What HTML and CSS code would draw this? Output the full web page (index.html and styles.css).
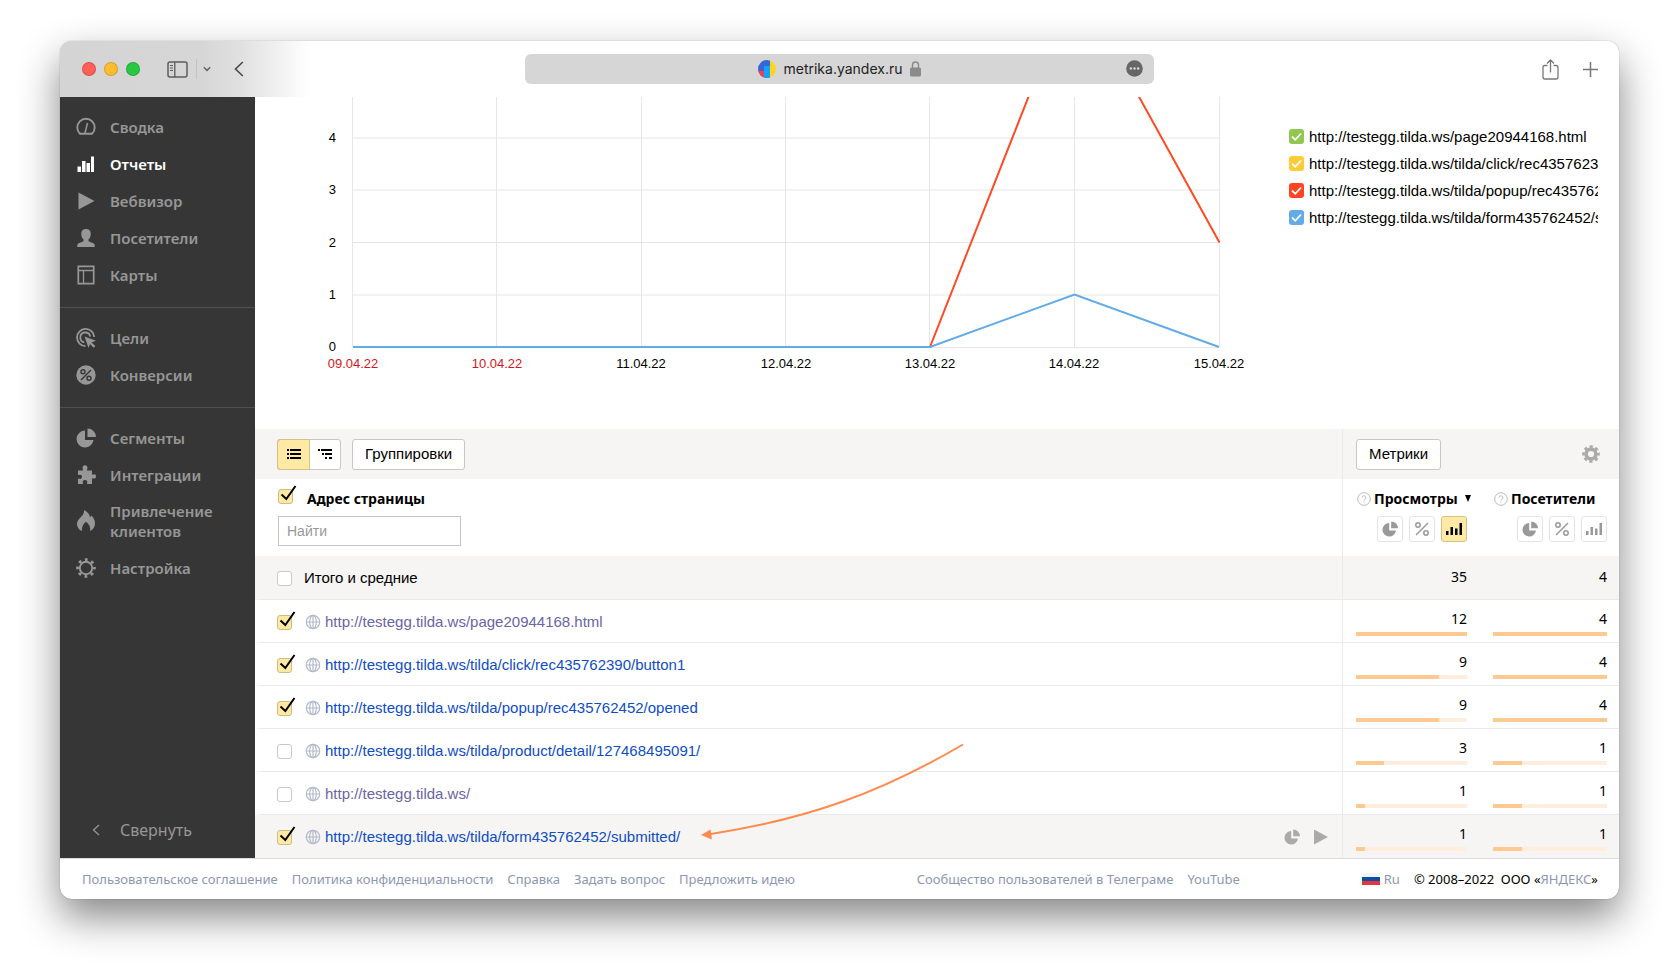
FILE: index.html
```html
<!DOCTYPE html>
<html lang="ru">
<head>
<meta charset="utf-8">
<title>Яндекс Метрика — Отчеты</title>
<link rel="stylesheet" href="styles.css">
</head>
<body>
<svg class="sprite" aria-hidden="true">
  <symbol id="i-tick" viewBox="0 0 20 20"><path d="M3.500 10.500 8.300 15 17.500 2" fill="none" stroke="#000" stroke-width="2"/></symbol>
  <symbol id="i-globe" viewBox="0 0 16 16"><g fill="none" stroke="#b4bacb" stroke-width="1.200"><circle cx="8" cy="8" r="6.700"/><ellipse cx="8" cy="8" rx="3.300" ry="6.700"/><path d="M8 1.300v13.400M1.300 8h13.400"/></g></symbol>
  <symbol id="i-pie" viewBox="0 0 20 20"><path d="M9 2.500A8.500 8.500 0 1 0 17.500 12H9z" fill="currentColor"/><path d="M11.500.500V9H20A8.500 8.500 0 0 0 11.500.500z" fill="currentColor"/></symbol>
  <symbol id="i-percent" viewBox="0 0 16 16"><g fill="none" stroke="currentColor" stroke-width="1.500"><circle cx="4" cy="4" r="2.200"/><circle cx="12" cy="12" r="2.200"/><path d="M14 2 2 14"/></g></symbol>
  <symbol id="i-bars" viewBox="0 0 16 16"><path d="M0 10h2.500v4H0zM4.500 6H7v8H4.500zM9 7.500h2.500V14H9zM13.500 2H16v12h-2.500z" fill="currentColor"/></symbol>
  <symbol id="i-help" viewBox="0 0 14 14"><circle cx="7" cy="7" r="6.300" fill="none" stroke="#bbb"/><path d="M5.200 5.600a1.800 1.800 0 1 1 2.700 1.500c-.700.400-.900.700-.900 1.400M7 9.500v1" fill="none" stroke="#bbb"/></symbol>
  <symbol id="i-play" viewBox="0 0 16 18"><path d="M0 .500 16 9 0 17.500z" fill="currentColor"/></symbol>
  <symbol id="i-check" viewBox="0 0 15 15"><path d="M3 7.500 6.300 10.800 12 4.500" fill="none" stroke="#fff" stroke-width="1.800"/></symbol>
</svg>

<div class="window">
  <header class="chrome">
    <div class="chrome-left">
      <div class="lights"><span class="light red"></span><span class="light amber"></span><span class="light green"></span></div>
      <button class="bare" aria-label="Боковая панель"><svg width="21" height="17" viewBox="0 0 21 17"><rect x="1" y="1" width="19" height="15" rx="2" fill="none" stroke="#5c5c5c" stroke-width="1.500"/><path d="M7.800 1v15" stroke="#5c5c5c" stroke-width="1.300"/><path d="M3 4.500h3M3 7h3M3 9.500h3" stroke="#5c5c5c"/></svg></button>
      <span class="chrome-sep"></span>
      <button class="bare" aria-label="Группы вкладок"><svg width="8" height="6" viewBox="0 0 8 6"><path d="M.800 1.200 4 4.400 7.200 1.200" fill="none" stroke="#666" stroke-width="1.500"/></svg></button>
      <button class="bare back" aria-label="Назад"><svg width="10" height="16" viewBox="0 0 10 16"><path d="M8.800 1 1.500 8l7.300 7" fill="none" stroke="#4a4a4a" stroke-width="1.600"/></svg></button>
    </div>
    <div class="address">
      <svg width="18" height="18" viewBox="0 0 18 18"><defs><clipPath id="disc"><circle cx="9" cy="9" r="9"/></clipPath></defs><g clip-path="url(#disc)"><path fill="#3565d6" d="M0 0h12v18H0z"/><path fill="#ffd51f" d="M12 0h6v18h-6z"/><path fill="#fb3a4d" d="M0 11h6v7H0z"/><path fill="#0fa3ff" d="M6 6h6v12H6z"/></g></svg>
      <span class="host">metrika.yandex.ru</span>
      <svg width="11" height="16" viewBox="0 0 11 16"><rect y="6.500" width="11" height="9" rx="1.500" fill="#8a8a8a"/><path d="M2.500 7V4a3 3 0 0 1 6 0v3" fill="none" stroke="#8a8a8a" stroke-width="1.400"/></svg>
      <button class="bare more" aria-label="Ещё"><svg width="17" height="17" viewBox="0 0 17 17"><circle cx="8.500" cy="8.500" r="8.300" fill="#666"/><g fill="#d9d9d9"><circle cx="4.800" cy="8.500" r="1.200"/><circle cx="8.500" cy="8.500" r="1.200"/><circle cx="12.200" cy="8.500" r="1.200"/></g></svg></button>
    </div>
    <div class="chrome-right">
      <button class="bare" aria-label="Поделиться"><svg width="17" height="21" viewBox="0 0 17 21"><path d="M5.500 6.500H3a2 2 0 0 0-2 2V18a2 2 0 0 0 2 2h11a2 2 0 0 0 2-2V8.500a2 2 0 0 0-2-2h-2.500M8.500 13.500V1.200M5 4.500 8.500 1 12 4.500" fill="none" stroke="#777" stroke-width="1.300"/></svg></button>
      <button class="bare" aria-label="Новая вкладка"><svg width="15" height="15" viewBox="0 0 15 15"><path d="M7.500 0v15M0 7.500h15" stroke="#777" stroke-width="1.500"/></svg></button>
    </div>
  </header>

  <div class="body">
    <nav class="sidebar">
      <div class="group">
        <a class="item" href="#"><svg width="20" height="20" viewBox="0 0 20 20"><path d="M4 16.800A8.700 8.700 0 1 1 16 16.800z" fill="none" stroke="currentColor" stroke-width="1.900" stroke-linejoin="round"/><path d="M11.500 6 9 16" stroke="currentColor" stroke-width="1.500"/></svg>Сводка</a>
        <a class="item active" href="#"><svg width="20" height="20" viewBox="0 0 20 20"><path d="M1.500 12.500h3.500V18H1.500zM6 7h3.500v11H6zM10.500 9h3.500v9h-3.500zM15 2.500h3V18h-3z" fill="currentColor"/></svg>Отчеты</a>
        <a class="item" href="#"><svg width="20" height="20" viewBox="0 0 20 20"><path d="M2.500 1.500 18.500 10l-16 8.500z" fill="currentColor"/></svg>Вебвизор</a>
        <a class="item" href="#"><svg width="20" height="20" viewBox="0 0 20 20"><path d="M10 1c3 0 4.800 1.900 4.800 4.800 0 2.400-1 4.700-2.300 5.700v1.800l5.300 2.200c.800.400 1 1.300 1 3.500H1.200c0-2.200.200-3.100 1-3.500l5.300-2.200v-1.800C6.200 10.500 5.200 8.200 5.200 5.800 5.200 2.900 7 1 10 1z" fill="currentColor"/></svg>Посетители</a>
        <a class="item" href="#"><svg width="20" height="20" viewBox="0 0 20 20"><path d="M2.300 1.300h15.400v17.400H2.300z" fill="none" stroke="currentColor" stroke-width="1.700"/><path d="M2 5.500h16M7.500 5.500V19" stroke="currentColor" stroke-width="1.300"/></svg>Карты</a>
      </div>
      <div class="group">
        <a class="item" href="#"><svg width="20" height="20" viewBox="0 0 20 20"><g fill="none" stroke="currentColor" stroke-width="1.800"><path d="M9.500 18.100A8.600 8.600 0 1 1 18.200 9"/><path d="M8.300 14.400A5 5 0 1 1 14.200 8.500"/></g><path d="M8.500 8.500 20 12.800l-4.400 1.600 3.700 3.700-1.600 1.600-3.700-3.700-1.500 4z" fill="currentColor"/></svg>Цели</a>
        <a class="item" href="#"><svg width="20" height="20" viewBox="0 0 20 20"><circle cx="10" cy="10" r="9.700" fill="currentColor"/><g fill="none" stroke="#363636" stroke-width="1.400"><circle cx="7" cy="6.800" r="2"/><circle cx="13" cy="13.200" r="2"/><path d="M15 5 5 15"/></g></svg>Конверсии</a>
      </div>
      <div class="group">
        <a class="item" href="#"><svg width="20" height="20"><use href="#i-pie"/></svg>Сегменты</a>
        <a class="item" href="#"><svg width="20" height="20" viewBox="0 0 20 20"><path d="M2 5.500h4.200c1.300 0 .800-1 .500-1.600C6 2 7.300.300 9 .300S12 2 11.300 3.900c-.300.600-.800 1.600.500 1.600H16V9c0 1.200 1 .700 1.500.400 1.400-.500 2.500.500 2.500 2s-1.100 2.600-2.500 2c-.500-.200-1.500-.700-1.500.500V19h-4.500c-1 0-.500-1-.300-1.500.500-1.400-.600-2.500-2.200-2.500s-2.700 1.100-2.200 2.500c.200.500.700 1.500-.300 1.500H2v-4.800c0-.900.800-.600 1.300-.400 1.400.500 2.700-.500 2.700-2s-1.300-2.500-2.700-2c-.5.200-1.300.500-1.300-.4z" fill="currentColor"/></svg>Интеграции</a>
        <a class="item two-line" href="#"><svg width="20" height="22" viewBox="0 0 20 22"><path d="M8.200 0c4.300 2.500 5.800 5.300 5.700 7.600l1.500-2.200C17.800 7.500 19 10.500 19 13.500c0 3.600-2 6.200-4.800 7.500.5-4-.9-6.800-4.200-9.300-2.800 2.300-4.500 5.300-4.100 9.300C3 19.700 1 17.200 1 13.900 1 8.500 8.500 6.500 8.200 0z" fill="currentColor"/></svg><span>Привлечение клиентов</span></a>
        <a class="item" href="#"><svg width="20" height="20" viewBox="0 0 20 20"><circle cx="10" cy="10" r="6.200" fill="none" stroke="currentColor" stroke-width="1.900"/><circle cx="10" cy="10" r="8.400" fill="none" stroke="currentColor" stroke-width="2.800" stroke-dasharray="2.800 3.797" stroke-dashoffset="1.400"/></svg>Настройка</a>
      </div>
      <button class="collapse"><svg width="8" height="12" viewBox="0 0 8 12"><path d="M7 1 1.500 6 7 11" fill="none" stroke="currentColor" stroke-width="1.200"/></svg>Свернуть</button>
    </nav>

    <main class="main">
      <section class="chart">
        <svg class="plot" viewBox="-1 0 1034 331" role="img" aria-label="Просмотры по дням">
          <g class="grid">
            <path d="M96.500 0v250M240.500 0v250M385.500 0v250M529.500 0v250M673.500 0v250M818.500 0v250M963.500 0v250"/>
            <path d="M97 41h866M97 93h866M97 145.500h866M97 198h866M97 250.500h866"/>
          </g>
          <path class="line orange" d="M674 250 818.500-117 963.500 145.500"/>
          <path class="line blue" d="M97 250H674L818.500 197.500 963 250"/>
          <g class="ylab"><text x="80" y="45">4</text><text x="80" y="97">3</text><text x="80" y="150">2</text><text x="80" y="202">1</text><text x="80" y="254">0</text></g>
          <g class="xlab"><text class="holiday" x="97" y="271">09.04.22</text><text class="holiday" x="241" y="271">10.04.22</text><text x="385" y="271">11.04.22</text><text x="530" y="271">12.04.22</text><text x="674" y="271">13.04.22</text><text x="818" y="271">14.04.22</text><text x="963" y="271">15.04.22</text></g>
        </svg>
        <div class="legend">
          <label class="key"><span class="swatch"><input type="checkbox" class="c-green" checked><svg><use href="#i-check"/></svg></span><span class="key-text">http://testegg.tilda.ws/page20944168.html</span></label>
          <label class="key"><span class="swatch"><input type="checkbox" class="c-yellow" checked><svg><use href="#i-check"/></svg></span><span class="key-text">http://testegg.tilda.ws/tilda/click/rec435762390/button1</span></label>
          <label class="key"><span class="swatch"><input type="checkbox" class="c-red" checked><svg><use href="#i-check"/></svg></span><span class="key-text">http://testegg.tilda.ws/tilda/popup/rec435762452/opened</span></label>
          <label class="key"><span class="swatch"><input type="checkbox" class="c-blue" checked><svg><use href="#i-check"/></svg></span><span class="key-text">http://testegg.tilda.ws/tilda/form435762452/submitted/</span></label>
        </div>
      </section>

      <section class="report">
        <div class="tools">
          <div class="tools-left">
            <div class="segmented">
              <button class="seg on" aria-label="Список"><svg width="14" height="10" viewBox="0 0 14 10"><path d="M0 0h2v2H0zM3 0h11v2H3zM0 4h2v2H0zM3 4h11v2H3zM0 8h2v2H0zM3 8h11v2H3z"/></svg></button>
              <button class="seg" aria-label="Дерево"><svg width="14" height="10" viewBox="0 0 14 10"><path d="M0 0h2v2H0zM3 0h11v2H3zM4 4h2v2H4zM7 4h7v2H7zM7 8h2v2H7zM11 8h3v2h-3z"/></svg></button>
            </div>
            <button class="btn">Группировки</button>
          </div>
          <div class="tools-right">
            <button class="btn">Метрики</button>
            <button class="bare" aria-label="Настройки"><svg width="18" height="18" viewBox="0 0 18 18"><circle cx="9" cy="9" r="4.900" fill="none" stroke="#aaa" stroke-width="3.600"/><circle cx="9" cy="9" r="7.500" fill="none" stroke="#aaa" stroke-width="2.600" stroke-dasharray="3.200 2.690" stroke-dashoffset="1.600"/></svg></button>
          </div>
        </div>

        <table class="table">
          <colgroup><col><col class="col-views"><col class="col-visitors"></colgroup>
          <thead>
            <tr>
              <th scope="col" class="head-page">
                <label class="page-label"><span class="box"><input type="checkbox" checked><svg><use href="#i-tick"/></svg></span>Адрес страницы</label>
                <input class="search" type="text" placeholder="Найти" aria-label="Найти">
              </th>
              <th scope="col" class="metric">
                <div class="metric-name"><svg class="help"><use href="#i-help"/></svg>Просмотры<svg class="sort" width="6" height="7" viewBox="0 0 6 7"><path d="M0 0h6L3 7z"/></svg></div>
                <div class="modes"><button class="mode" aria-label="Круг"><svg><use href="#i-pie"/></svg></button><button class="mode" aria-label="Проценты"><svg><use href="#i-percent"/></svg></button><button class="mode on" aria-label="Столбцы"><svg><use href="#i-bars"/></svg></button></div>
              </th>
              <th scope="col">
                <div class="metric-name"><svg class="help"><use href="#i-help"/></svg>Посетители</div>
                <div class="modes"><button class="mode" aria-label="Круг"><svg><use href="#i-pie"/></svg></button><button class="mode" aria-label="Проценты"><svg><use href="#i-percent"/></svg></button><button class="mode" aria-label="Столбцы"><svg><use href="#i-bars"/></svg></button></div>
              </th>
            </tr>
          </thead>
          <tbody>
            <tr class="total">
              <td><label class="cell"><span class="box"><input type="checkbox"><svg><use href="#i-tick"/></svg></span>Итого и средние</label></td>
              <td class="metric num">35</td><td class="num">4</td>
            </tr>
            <tr class="s-green">
              <td><div class="cell"><span class="box"><input type="checkbox" aria-label="page20944168" checked><svg><use href="#i-tick"/></svg></span><svg class="globe"><use href="#i-globe"/></svg><a class="visited" href="#">http://testegg.tilda.ws/page20944168.html</a></div></td>
              <td class="metric num">12<div class="bar"><div style="width:100%"></div></div></td><td class="num">4<div class="bar"><div style="width:100%"></div></div></td>
            </tr>
            <tr class="s-yellow">
              <td><div class="cell"><span class="box"><input type="checkbox" aria-label="button1" checked><svg><use href="#i-tick"/></svg></span><svg class="globe"><use href="#i-globe"/></svg><a href="#">http://testegg.tilda.ws/tilda/click/rec435762390/button1</a></div></td>
              <td class="metric num">9<div class="bar"><div style="width:75%"></div></div></td><td class="num">4<div class="bar"><div style="width:100%"></div></div></td>
            </tr>
            <tr class="s-red">
              <td><div class="cell"><span class="box"><input type="checkbox" aria-label="opened" checked><svg><use href="#i-tick"/></svg></span><svg class="globe"><use href="#i-globe"/></svg><a href="#">http://testegg.tilda.ws/tilda/popup/rec435762452/opened</a></div></td>
              <td class="metric num">9<div class="bar"><div style="width:75%"></div></div></td><td class="num">4<div class="bar"><div style="width:100%"></div></div></td>
            </tr>
            <tr>
              <td><div class="cell"><span class="box"><input type="checkbox" aria-label="product"><svg><use href="#i-tick"/></svg></span><svg class="globe"><use href="#i-globe"/></svg><a href="#">http://testegg.tilda.ws/tilda/product/detail/127468495091/</a></div></td>
              <td class="metric num">3<div class="bar"><div style="width:25%"></div></div></td><td class="num">1<div class="bar"><div style="width:25%"></div></div></td>
            </tr>
            <tr>
              <td><div class="cell"><span class="box"><input type="checkbox" aria-label="testegg.tilda.ws"><svg><use href="#i-tick"/></svg></span><svg class="globe"><use href="#i-globe"/></svg><a class="visited" href="#">http://testegg.tilda.ws/</a></div></td>
              <td class="metric num">1<div class="bar"><div style="width:8%"></div></div></td><td class="num">1<div class="bar"><div style="width:25%"></div></div></td>
            </tr>
            <tr class="s-blue hover">
              <td><div class="cell"><span class="box"><input type="checkbox" aria-label="submitted" checked><svg><use href="#i-tick"/></svg></span><svg class="globe"><use href="#i-globe"/></svg><a href="#">http://testegg.tilda.ws/tilda/form435762452/submitted/</a>
                <span class="actions"><button class="bare" aria-label="Сегмент"><svg width="16" height="16"><use href="#i-pie"/></svg></button><button class="bare" aria-label="Вебвизор"><svg width="14" height="16"><use href="#i-play"/></svg></button></span></div></td>
              <td class="metric num">1<div class="bar"><div style="width:8%"></div></div></td><td class="num">1<div class="bar"><div style="width:25%"></div></div></td>
            </tr>
          </tbody>
        </table>
        <svg class="arrow" width="265" height="102" viewBox="0 0 265 102"><path d="M263 3.500C180 52 108 78 11 93" fill="none" stroke="#ff8a50" stroke-width="2"/><path d="M1 94 10.500 88.500 12 98.500z" fill="#ff8a50"/></svg>
      </section>
    </main>
  </div>

  <footer class="footer">
    <div class="links"><a href="#">Пользовательское соглашение</a><a href="#">Политика конфиденциальности</a><a href="#">Справка</a><a href="#">Задать вопрос</a><a href="#">Предложить идею</a></div>
    <div class="links"><a href="#">Сообщество пользователей в Телеграме</a><a href="#">YouTube</a></div>
    <div class="links"><a class="lang" href="#"><svg width="18" height="12" viewBox="0 0 18 12"><path fill="#f4f4f6" d="M0 0h18v4H0z"/><path fill="#0b4ea2" d="M0 4h18v4H0z"/><path fill="#e4343f" d="M0 8h18v4H0z"/></svg>Ru</a><span>© 2008–2022&nbsp; ООО «<a href="#">ЯНДЕКС</a>»</span></div>
  </footer>
</div>
</body>
</html>
```

FILE: styles.css
```css
* { box-sizing: border-box; }

body {
  margin: 0;
  min-height: 100vh;
  padding: 41px 61px 79px 60px;
  background: #fff;
  color: #000;
  font: 15px/20px "Liberation Sans", Arial, sans-serif;
}

a { color: #0f4dc4; text-decoration: none; }
button, input { font: inherit; color: inherit; }
svg { display: block; flex: none; }
.sprite { position: absolute; width: 0; height: 0; }
.bare { padding: 0; border: 0; background: none; cursor: pointer; }

.window {
  display: flex;
  flex-direction: column;
  border-radius: 12px;
  overflow: hidden;
  background: #fff;
  box-shadow: 0 0 1px rgba(0, 0, 0, .5), 0 18px 40px rgba(0, 0, 0, .48);
}

/* Browser bar */
.chrome {
  display: grid;
  grid-template-columns: 1fr minmax(0, 629px) 1fr;
  align-items: center;
  height: 56px;
  background: linear-gradient(90deg, #d4d4d4 0, #d6d6d6 140px, #e0e0e0 180px, #fff 250px);
}
.chrome-left { display: flex; align-items: center; padding-left: 22px; }
.lights { display: flex; gap: 8px; margin-right: 27px; }
.light { width: 14px; height: 14px; border-radius: 50%; border: 1px solid rgba(0, 0, 0, .15); }
.red { background: #fe5f57; }
.amber { background: #febc2e; }
.green { background: #28c840; }
.chrome-sep { width: 1px; height: 20px; margin: 0 6px 0 8px; background: #c4c4c4; }
.back { margin-left: 23px; }
.address {
  position: relative;
  display: flex;
  align-items: center;
  justify-content: center;
  gap: 7px;
  height: 30px;
  border-radius: 6px;
  background: #d6d6d6;
}
.host { font: 14px/20px Inter, "Liberation Sans", sans-serif; color: #222; }
.more { position: absolute; right: 11px; top: 6px; }
.chrome-right { display: flex; align-items: center; justify-content: flex-end; gap: 24px; padding-right: 21px; }

.body { display: flex; flex: 1; }

/* Navigation */
.sidebar {
  display: flex;
  flex-direction: column;
  flex: none;
  width: 195px;
  background: #363636;
  color: #979797;
  font: 600 15px/20px "Noto Sans", sans-serif;
}
.group { padding: 11px 0 14px; border-bottom: 1px solid #505050; }
.group:last-of-type { border-bottom: 0; }
.item { display: flex; align-items: center; gap: 14px; height: 37px; padding-left: 16px; color: inherit; }
.item.active { color: #fff; }
.two-line { height: 56px; padding-right: 30px; }
.collapse {
  display: flex;
  align-items: center;
  gap: 20px;
  margin-top: auto;
  padding: 0 0 18px 32px;
  border: 0;
  background: none;
  font-size: 16px;
  font-weight: 400;
}

.main { flex: 1; min-width: 0; }

/* Chart */
.chart { display: flex; align-items: flex-start; padding: 0 21px 1px 0; }
.plot { flex: 1; min-width: 0; font-size: 13px; }
.grid path { fill: none; stroke: #e6e6e6; }
.line { fill: none; stroke-width: 2; }
.orange { stroke: #ff4a22; }
.blue { stroke: #62abe8; }
.ylab { text-anchor: end; }
.xlab { text-anchor: middle; }
.holiday { fill: #d0181c; }
.legend { width: 309px; padding-top: 26px; }
.key { display: flex; align-items: center; gap: 5px; height: 27px; }
.key-text { overflow: hidden; white-space: nowrap; }
.swatch { position: relative; flex: none; width: 15px; height: 15px; }
.swatch input { display: block; appearance: none; width: 15px; height: 15px; margin: 0; border-radius: 3px; }
.swatch svg { position: absolute; inset: 0; width: 15px; height: 15px; pointer-events: none; }
.c-green { background: #8fc74f; }
.c-yellow { background: #ffcb37; }
.c-red { background: #ff4423; }
.c-blue { background: #62abe8; }

/* Report toolbar */
.report { position: relative; }
.tools { display: flex; height: 50px; background: #f6f5f3; }
.tools-left { display: flex; flex: 1; align-items: center; gap: 11px; padding-left: 22px; }
.tools-right {
  display: flex;
  align-items: center;
  justify-content: space-between;
  width: 277px;
  padding: 0 19px 0 13px;
  border-left: 1px solid #eaeaea;
}
.btn {
  height: 31px;
  padding: 0 12px;
  border: 1px solid #c8c7c5;
  border-radius: 3px;
  background: #fff;
}
.segmented { display: flex; height: 31px; border: 1px solid #c8c7c5; border-radius: 3px; background: #fff; }
.seg { display: grid; place-items: center; width: 31px; padding: 0; border: 0; background: none; }
.seg.on { background: #ffe9a3; box-shadow: 0 0 0 1px #d5c088; border-radius: 3px 0 0 3px; }

/* Report table */
.table { width: 100%; border-collapse: separate; border-spacing: 0; table-layout: fixed; }
.col-views { width: 138px; }
.col-visitors { width: 139px; }
.table th, .table td { padding: 0 12px 0 13px; text-align: left; vertical-align: top; }
.table .metric { padding-right: 13px; border-left: 1px solid #eaeaea; }
.table th { height: 77px; font: 700 14px/20px "Noto Sans", sans-serif; }
.table .head-page { padding: 10px 0 0 23px; }
.page-label { display: flex; gap: 14px; height: 27px; }
.search {
  display: block;
  width: 183px;
  height: 30px;
  padding: 0 8px;
  border: 1px solid #c6c6c6;
  background: #fff;
  font: 14px/20px "Liberation Sans", Arial, sans-serif;
}
.search::placeholder { color: #999; }
.metric-name { display: flex; align-items: center; gap: 3px; height: 37px; padding-top: 2px; padding-left: 1px; }
.help { width: 14px; height: 14px; }
.sort { margin-left: 4px; }
.modes { display: flex; justify-content: flex-end; gap: 6px; }
.mode {
  display: grid;
  place-items: center;
  width: 26px;
  height: 26px;
  padding: 0;
  border: 1px solid #e4e4e4;
  border-radius: 3px;
  background: #fff;
  color: #999;
}
.mode svg { width: 16px; height: 16px; }
.mode.on { border-color: #d5c088; background: #ffe9a3; color: #000; }

.table td { height: 43px; border-bottom: 1px solid #eaeaea; }
.table tbody td:first-child { padding: 0 14px 0 16px; border-left: 6px solid transparent; }
.total td { height: 44px; background: #f6f5f3; }
.total td:first-child { border-left-color: #f6f5f3; }
.s-green td:first-child { border-left-color: #92ca5f; }
.s-yellow td:first-child { border-left-color: #ffd35a; }
.s-red td:first-child { border-left-color: #ff5a40; }
.s-blue td:first-child { border-left-color: #78b5e8; }
.hover td { background: #f6f5f3; border-bottom: 0; }
.cell { display: flex; align-items: center; height: 42px; padding-top: 2px; }
.total .cell { gap: 12px; }
.globe { width: 16px; height: 16px; margin: 0 4px 0 13px; }
.visited { color: #6b64a6; }
.actions { display: flex; gap: 14px; margin-left: auto; color: #aaa; }

.box { position: relative; flex: none; width: 15px; height: 15px; }
.box input {
  display: block;
  appearance: none;
  width: 15px;
  height: 15px;
  margin: 0;
  border: 1px solid #c9c9c9;
  border-radius: 3px;
  background: #fff;
}
.box input:checked { border-color: #d0bc82; background: #ffe9a3; }
.box svg { position: absolute; left: 0; bottom: 0; width: 20px; height: 20px; display: none; pointer-events: none; }
.box input:checked + svg { display: block; }

.table td.num { text-align: right; font: 14px/20px "Noto Sans", sans-serif; padding-top: 9px; }
.table .total td.num { padding-top: 11px; }
.bar { height: 4px; margin-top: 3px; background: #ffeedd; }
.bar div { height: 4px; background: #ffca91; }

/* Pointer to the form submission row */
.arrow { position: absolute; left: 445px; bottom: 15px; pointer-events: none; }

.footer {
  display: flex;
  align-items: center;
  justify-content: space-between;
  height: 41px;
  padding: 0 21px 0 22px;
  border-top: 1px solid #dcdcdc;
  font: 13px/20px "Noto Sans", sans-serif;
}
.footer a { color: #8d97b4; }
.links { display: flex; align-items: center; gap: 14px; white-space: nowrap; }
.lang { display: flex; align-items: center; gap: 4px; }
```
